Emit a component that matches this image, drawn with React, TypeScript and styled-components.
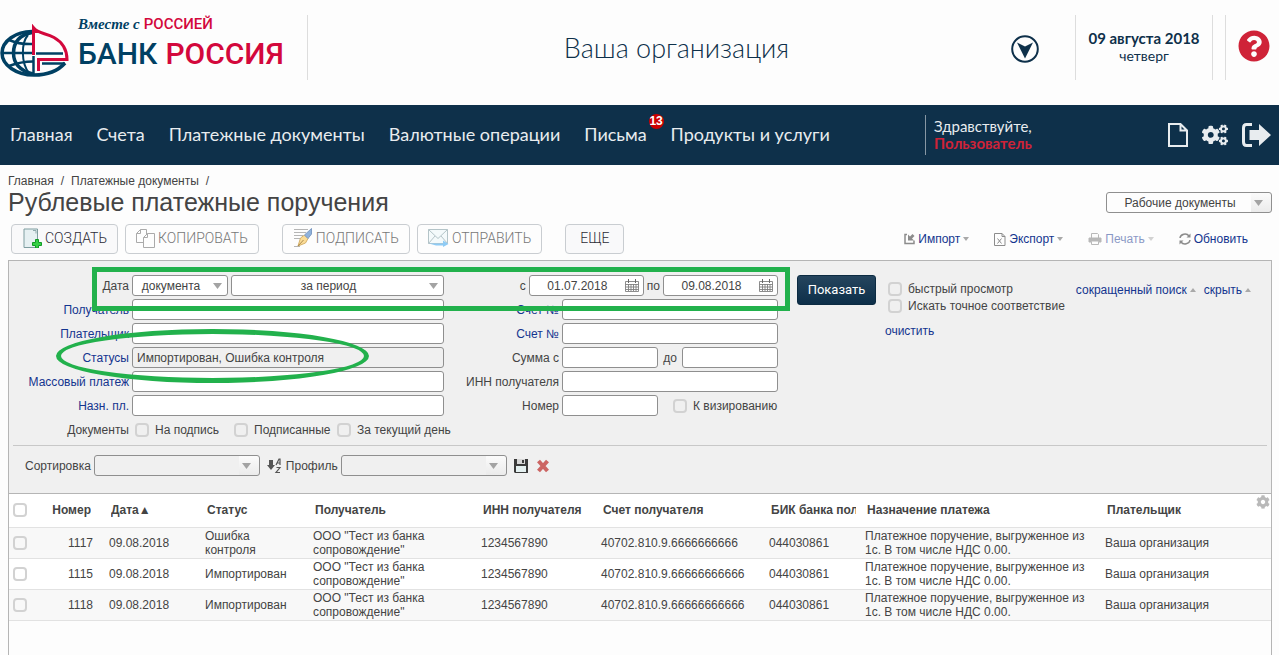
import React from "react";
import styled, { createGlobalStyle, css } from "styled-components";
import { FaCog, FaCogs, FaQuestionCircle } from "react-icons/fa";

const navy = "#0e304a";
const crimson = "#cf2338";
const logoBlue = "#004063";
const logoRed = "#d3083c";
const ink = "#444";
const link = "#14358f";
const mark = "#22b14c";

const GlobalStyle = createGlobalStyle`
  *, *::before, *::after { box-sizing: border-box; }
  body {
    margin: 0;
    background: #fdfdfd;
    color: ${ink};
    font: 12px/14px "Liberation Sans", Arial, sans-serif;
  }
  button, input, select { font: inherit; color: inherit; }
  a { text-decoration: none; color: inherit; }
`;

const Page = styled.div`
  min-height: 100vh;
  display: flex;
  flex-direction: column;
`;

/* ---------- header ---------- */

const Header = styled.header`
  display: flex;
  align-items: flex-start;
  height: 105px;
  padding-top: 15px;
  color: ${navy};
  font-family: Lato, "Open Sans", sans-serif;
`;

const Cell = styled.div`
  display: flex;
  align-items: center;
  justify-content: center;
  height: 65px;
  flex: none;
`;

const LogoCell = styled(Cell)`
  width: 308px;
  border-right: 1px solid #ddd;
  align-items: flex-start;
  justify-content: flex-start;
`;

const LogoLink = styled.a`
  display: flex;
  align-items: flex-end;
  gap: 8px;
  svg { display: block; }
`;

const LogoText = styled.span`
  display: flex;
  flex-direction: column;
  height: 63px;
`;

const Slogan = styled.span`
  display: flex;
  align-items: baseline;
  gap: 4px;
  font: 500 15px/18px Roboto, sans-serif;
  color: ${logoRed};
  i {
    font: italic bold 15px/18px "Liberation Serif", serif;
    color: ${logoBlue};
  }
`;

const BankName = styled.span`
  display: flex;
  gap: 8px;
  font: 500 30px/42px Roboto, sans-serif;
  color: ${logoBlue};
  b { font-weight: 500; color: ${logoRed}; }
`;

const Organization = styled.div`
  flex: 1;
  padding-left: 38px;
  text-align: center;
  font-size: 27px;
  font-weight: 300;
  line-height: 66px;
`;

const RoundButton = styled.button`
  display: flex;
  padding: 0;
  border: 0;
  background: none;
  cursor: pointer;
`;

const OrgCell = styled(Cell)`
  width: 36px;
  height: 68px;
  margin-right: 32px;
`;

const DateCell = styled(Cell)`
  width: 138px;
  flex-direction: column;
  padding-bottom: 2px;
  border-left: 1px solid #ddd;
  border-right: 1px solid #ddd;
  font-size: 15px;
  line-height: 17px;
  span { font-size: 14px; }
`;

const HelpCell = styled(Cell)`
  width: 54px;
  margin-left: 12px;
  padding: 0 0 3px 2px;
  border-left: 1px solid #ddd;
  color: ${crimson};
`;

/* ---------- navigation ---------- */

const NavBar = styled.nav`
  display: flex;
  align-items: center;
  height: 60px;
  padding: 0 8px 0 10px;
  background: ${navy};
  color: #e8ecef;
  font-family: Lato, "Open Sans", sans-serif;
`;

const NavList = styled.div`
  display: flex;
  flex: 1;
  gap: 24px;
  padding-bottom: 2px;
  font-size: 18px;
  line-height: 20px;
  white-space: nowrap;
`;

const NavLink = styled.a`
  position: relative;
`;

const Badge = styled.span`
  position: absolute;
  top: -10px;
  right: -17px;
  width: 15px;
  height: 15px;
  border-radius: 50%;
  background: #cc0000;
  color: #fff;
  font: bold 12px/15px "Liberation Sans", sans-serif;
  text-align: center;
`;

const Greeting = styled.div`
  width: 243px;
  height: 40px;
  padding: 3px 0 0 8px;
  border-left: 1px solid #8797a4;
  font-size: 15px;
  line-height: 17px;
  b { display: block; font-size: 15px; color: ${crimson}; }
`;

const NavIcons = styled.div`
  display: flex;
  align-items: center;
  gap: 14px;
`;

/* ---------- page heading and toolbar ---------- */

const Heading = styled.div`
  display: flex;
  justify-content: space-between;
  align-items: flex-end;
  padding: 9px 7px 0 8px;
`;

const Crumbs = styled.div`
  display: flex;
  gap: 7px;
`;

const Title = styled.h1`
  margin: 0;
  font-size: 25px;
  font-weight: normal;
  line-height: 29px;
`;

const SectionPicker = styled.div`
  padding-bottom: 4px;
`;

const Toolbar = styled.div`
  display: flex;
  align-items: center;
  padding: 7px 31px 6px 11px;
`;

const ToolGroup = styled.div`
  display: flex;
  gap: 7px;
  margin-right: 23px;
`;

const ToolButton = styled.button<{ $wide?: boolean }>`
  display: flex;
  align-items: center;
  gap: 3px;
  height: 30px;
  padding: 0 ${p => (p.$wide ? 14 : 10)}px 2px;
  border: 1px solid #c9cdd1;
  border-radius: 4px;
  background: #f9f9fa;
  color: #2c2c36;
  font: 300 14px/20px Roboto, sans-serif;
  &:disabled { background: #fdfdfd; color: #777; }
`;

const ActionLinks = styled.div`
  display: flex;
  gap: 25px;
  margin-left: auto;
`;

const Action = styled.a<{ $dim?: boolean }>`
  display: flex;
  align-items: center;
  gap: 3px;
  color: ${link};
  opacity: ${p => (p.$dim ? 0.5 : 1)};
`;

/* ---------- controls ---------- */

const box = css`
  height: 21px;
  border: 1px solid #8f8f8f;
  border-radius: 3px;
  background: #fff;
`;

const Input = styled.input<{ $w?: number }>`
  ${box}
  width: ${p => (p.$w ? `${p.$w}px` : "100%")};
  min-width: 0;
  padding: 0 4px;
  &:read-only { background: #f0f0f0; }
`;

const SelectWrap = styled.span<{ $w: number; $split?: boolean }>`
  ${box}
  position: relative;
  display: flex;
  align-items: stretch;
  width: ${p => p.$w}px;
  background: ${p => (p.$split ? "linear-gradient(#fbfbfb, #ebebeb) right / 20px 100% no-repeat" : "#fff")};
  svg { right: ${p => (p.$split ? 8 : 5)}px; }
`;

const SelectField = styled.select`
  appearance: none;
  flex: 1;
  min-width: 0;
  padding: 0 20px 0 2px;
  border: 0;
  background: none;
  text-align: center;
  text-align-last: center;
`;

const SelectArrow = styled.svg`
  position: absolute;
  top: 7px;
  pointer-events: none;
`;

const DateWrap = styled.span`
  ${box}
  display: flex;
  align-items: center;
  width: 115px;
  padding-right: 4px;
  input {
    flex: 1;
    min-width: 0;
    height: 19px;
    padding: 0;
    border: 0;
    background: none;
    text-align: center;
  }
`;

const Tick = styled.input.attrs({ type: "checkbox" })`
  appearance: none;
  flex: none;
  width: 14px;
  height: 14px;
  margin: 0;
  border: 2px solid #d2d2d2;
  border-radius: 4px;
  &:checked { background: #888; }
`;

const TickLabel = styled.label`
  display: flex;
  align-items: center;
  gap: 6px;
  white-space: nowrap;
`;

/* ---------- filter panel ---------- */

const Panel = styled.main`
  flex: 1;
  margin: 0 7px 0 8px;
  border: 1px solid #b5b5b5;
  border-bottom: 0;
`;

const Filter = styled.form`
  position: relative;
  padding: 14px 4px 0;
  border-bottom: 1px solid #b5b5b5;
  background: #f0f0f0;
`;

const FilterTop = styled.div`
  display: flex;
  align-items: flex-start;
  padding-bottom: 5px;
  border-bottom: 1px solid #c8c8c8;
`;

const Fields = styled.div<{ $label: number; $field: number }>`
  display: grid;
  grid-template-columns: ${p => p.$label}px ${p => p.$field}px;
  grid-auto-rows: 21px;
  gap: 3px;
  align-items: center;
`;

const FieldLabel = styled.label<{ $link?: boolean }>`
  text-align: right;
  white-space: nowrap;
  color: ${p => (p.$link ? link : ink)};
`;

const Line = styled.div<{ $gap?: number; $spread?: boolean }>`
  display: flex;
  align-items: center;
  justify-content: ${p => (p.$spread ? "space-between" : "flex-start")};
  gap: ${p => p.$gap ?? 3}px;
`;

const DateLine = styled(Line)`
  grid-column: 1 / -1;
  justify-content: flex-end;
`;

const TickLine = styled.div`
  display: grid;
  grid-template-columns: 99px 103px auto;
  padding-left: 3px;
`;

const ShowButton = styled.button`
  width: 79px;
  height: 30px;
  margin: 0 12px 0 19px;
  padding: 0;
  border: 1px solid #0c2b42;
  border-radius: 3px;
  background: linear-gradient(#25455e, #0d2f49);
  color: #fff;
  font: 13px/20px Roboto, sans-serif;
`;

const Options = styled.div`
  display: flex;
  flex-direction: column;
  gap: 3px;
  padding-top: 7px;
  a { margin: 8px 0 0 -3px; color: ${link}; }
`;

const FoldLinks = styled.div`
  display: flex;
  gap: 8px;
  margin: 8px 16px 0 auto;
`;

const SortLine = styled.div`
  display: flex;
  align-items: center;
  gap: 3px;
  height: 47px;
  padding: 0 0 8px 12px;
`;

const IconButton = styled.button`
  display: flex;
  margin: 0 1px 0 4px;
  padding: 0;
  border: 0;
  background: none;
`;

const HighlightBox = styled.div`
  position: absolute;
  left: 83px;
  top: 6px;
  width: 698px;
  height: 44px;
  border: 5px solid ${mark};
  pointer-events: none;
`;

const HighlightOval = styled.div`
  position: absolute;
  left: 47px;
  top: 68px;
  width: 313px;
  height: 54px;
  border: 5px solid ${mark};
  border-radius: 50%;
  pointer-events: none;
`;

/* ---------- documents table ---------- */

const TableWrap = styled.div`
  position: relative;
`;

const Table = styled.table`
  width: 100%;
  table-layout: fixed;
  border-collapse: collapse;
  background: #fff;
  th, td {
    height: 31px;
    padding: 1px 8px;
    border-bottom: 1px solid #e2e2e2;
    text-align: left;
  }
  th {
    height: 33px;
    padding: 0 1px 0 10px;
    white-space: nowrap;
  }
  th div { overflow: hidden; }
  tbody tr:nth-child(odd) { background: #f8f8f8; }
  tr > :first-child { padding: 0 0 0 4px; }
  tr > :first-child input { display: block; }
  th:nth-child(2) { text-align: right; padding-left: 0; padding-right: 10px; }
  td:nth-child(2) { text-align: right; }
`;

const GearButton = styled.button`
  position: absolute;
  top: 1px;
  right: 1px;
  display: flex;
  padding: 0;
  border: 0;
  background: none;
  color: #b9b9b9;
`;

/* ---------- drawings ---------- */

const Emblem = () => (
  <svg width="70" height="54" viewBox="0 0 70 54" fill="none">
    <g stroke={logoBlue} strokeWidth="3.500">
      <path d="M65 39C58 47 47 51 34 51 16 51 2 41 2 29S16 7.500 32 7.500" />
      <path d="M32 8.500C20 11 13.500 18 13.500 29S21 47 33 50" />
      <path d="M28 11C21 19 21 39 29 49" strokeWidth="2" />
      <path d="M2 29H33M9 16C16 19 24 20.500 33 20M9 42C17 39 24 37.500 33 37.500" strokeWidth="2.500" />
      <path d="M36 29.500H63M42 39.500H65M33.500 32V50" strokeWidth="2.500" />
    </g>
    <path d="M33.500 31V4C38 9.500 46 9 54 13.500 62 18 67 24 67 35.500H38.500V47" stroke={logoRed} strokeWidth="3" />
    <path d="M32 0L40 9H32Z" fill={logoRed} />
  </svg>
);

const CircleArrow = () => (
  <svg width="28" height="28" viewBox="0 0 28 28">
    <circle cx="14" cy="14" r="12.800" fill="none" stroke={navy} strokeWidth="2" />
    <path d="M6 7.500L14 11.500 22 7.500 14 23.500Z" fill={navy} />
  </svg>
);

const PageIcon = () => (
  <svg width="20" height="24" viewBox="0 0 20 24" fill="none" stroke="#e8ecef" strokeWidth="2">
    <path d="M1 1H12.500L19 7.500V23H1ZM12.500 1V7.500H19" />
  </svg>
);

const ExitIcon = () => (
  <svg width="29" height="24" viewBox="0 0 29 24">
    <path d="M10 1.500H4.500Q1.500 1.500 1.500 5V19Q1.500 22.500 4.500 22.500H10" fill="none" stroke="#e8ecef" strokeWidth="3" />
    <path d="M7.500 7H17V1L29 12 17 23V17H7.500Z" fill="#e8ecef" />
  </svg>
);

const Caret = ({ up = false }: { up?: boolean }) => (
  <svg width="6" height="4" viewBox="0 0 6 4">
    <path d={up ? "M0 4L3 0 6 4Z" : "M0 0H6L3 4Z"} fill="#a9a9a9" />
  </svg>
);

const CreateIcon = () => (
  <svg width="20" height="20" viewBox="0 0 20 20">
    <path d="M2 1H15.500V19.500H2Z" fill="#e6f0f2" stroke="#7f9da0" />
    <path d="M11 2.500H14V5.500" fill="none" stroke="#8fa9ac" />
    <path d="M13.500 11.500H16.500V14.500H19.500V17.500H16.500V20H13.500V17.500H10.500V14.500H13.500Z" fill="#35d045" stroke="#129a26" />
  </svg>
);

const CopyIcon = () => (
  <svg width="19" height="19" viewBox="0 0 19 19" fill="#fdfdfd" stroke="#aaa">
    <path d="M4.500 .5H10.500V13.500H.5V4.500ZM4.500 .5V4.500H.5" />
    <path d="M11.500 4.500H18.500V18.500H7.500V8.500ZM11.500 4.500V8.500H7.500" />
  </svg>
);

const SignIcon = () => (
  <svg width="20" height="20" viewBox="0 0 20 20">
    <path d="M1 1.500H15M1 4.500H13M1 7.500H10M1 10.500H7M1 18.500H7" stroke="#b5b5b5" />
    <path d="M5 18L7.500 10 11.500 7 15 10.500 12.500 15Z" fill="#fbdc96" stroke="#d5b16b" />
    <path d="M11.500 7L18.500 .5V6L15 10.500Z" fill="#8fb2dc" stroke="#7f9cc4" />
    <path d="M5 18L10.500 12" stroke="#a98a50" />
  </svg>
);

const SendIcon = () => (
  <svg width="21" height="18" viewBox="0 0 21 18">
    <path d="M.5 .5H19.500V14.500H.5Z" fill="#f4fafb" stroke="#b4c4c8" />
    <path d="M.5 .5L10 9.500 19.500 .5M.5 14.500L7 7M19.500 14.500L13 7" fill="none" stroke="#b4c4c8" />
    <path d="M1 14.500H15V11.500L20.500 15 15 18V16.500H8Z" fill="#8ecbf5" />
  </svg>
);

const ImportIcon = () => (
  <svg width="11" height="12" viewBox="0 0 11 12" fill="none" stroke="#8c8c8c">
    <path d="M3 1.500H1V10.500H10V7.500" strokeWidth="1.500" />
    <path d="M4 7.500V1.500L6 3.500 8.500 1 10.500 3 8 5.500 10 7.500Z" fill="#8c8c8c" stroke="none" />
  </svg>
);

const ExportIcon = () => (
  <svg width="12" height="13" viewBox="0 0 12 13" fill="none" stroke="#8c8c8c">
    <path d="M.5 .5H8L11 3.500V12.500H.5ZM8 .5V3.500H11" />
    <path d="M3.500 5.500L7.500 10.500M7.500 5.500L3.500 10.500" />
  </svg>
);

const PrintIcon = () => (
  <svg width="14" height="12" viewBox="0 0 14 12" fill="none" stroke="#777">
    <path d="M3.500 5V.5H9.500L10.500 1.500V5M3.500 8.500V11.500H10.500V8.500" />
    <path d="M1 5H13V9H11V8H3V9H1Z" fill="#777" stroke="#777" />
  </svg>
);

const RefreshIcon = () => (
  <svg width="12" height="12" viewBox="0 0 12 12" fill="none" stroke="#8c8c8c" strokeWidth="1.500">
    <path d="M1 5C1.500 1 7.500 -.5 10 3M11 7C10.500 11 4.500 12.500 2 9" />
    <path d="M11.500 .5V4.500H7.500ZM.5 11.500V7.500H4.500Z" fill="#8c8c8c" stroke="none" />
  </svg>
);

const CalendarIcon = () => (
  <svg width="14" height="13" viewBox="0 0 14 13" fill="none" stroke="#808080">
    <path d="M.5 2.500H13.500V12.500H.5ZM.5 5.500H13.500M.5 8H13.500M.5 10.500H13.500M3.500 5V12M6 5V12M8.500 5V12M11 5V12" strokeWidth=".9" />
    <path d="M3.500 0V4M10.500 0V4" stroke="#6a6a6a" />
  </svg>
);

const SortIcon = () => (
  <svg width="15" height="16" viewBox="0 0 15 16" fill="none" stroke="#555">
    <path d="M2 2H6V7H8L4 12 0 7H2Z" fill="#555" stroke="none" />
    <path d="M9 7L12 1H13V7M10 5H13M9.500 9.500H13L9 14.500H13" strokeWidth="1.200" />
  </svg>
);

const SaveIcon = () => (
  <svg width="14" height="14" viewBox="0 0 14 14">
    <path d="M0 0H14V14H1L0 13Z" fill="#3b3b3b" />
    <path d="M3 0H11V5H3Z" fill="#d7d7d7" />
    <path d="M8 1H10V4H8Z" fill="#3b3b3b" />
    <path d="M2 7H12V13H2Z" fill="#e4f0f0" />
  </svg>
);

const DeleteIcon = () => (
  <svg width="14" height="14" viewBox="0 0 14 14">
    <path d="M2.500 2L11.500 12M11.500 2L2.500 12" stroke="#cc6563" strokeWidth="4" />
  </svg>
);

/* ---------- composed parts ---------- */

type DropDownProps = { label: string; value?: string; width: number; split?: boolean; id?: string };

const DropDown = ({ label, value = "", width, split, id }: DropDownProps) => (
  <SelectWrap $w={width} $split={split}>
    <SelectField id={id} aria-label={label} defaultValue={value}>
      <option value={value}>{value}</option>
    </SelectField>
    <SelectArrow width="9" height="6" viewBox="0 0 9 6">
      <path d="M0 0H9L4.500 6Z" fill="#a3a3a3" />
    </SelectArrow>
  </SelectWrap>
);

const DateField = ({ id, value }: { id: string; value: string }) => (
  <DateWrap>
    <input id={id} defaultValue={value} />
    <CalendarIcon />
  </DateWrap>
);

const Check = ({ children }: { children: string }) => (
  <TickLabel>
    <Tick />
    {children}
  </TickLabel>
);

const menu = ["Главная", "Счета", "Платежные документы", "Валютные операции", "Письма", "Продукты и услуги"];

const columns = [
  { name: "Номер", width: 60 },
  { name: "Дата▲", width: 96 },
  { name: "Статус", width: 108 },
  { name: "Получатель", width: 168 },
  { name: "ИНН получателя", width: 120 },
  { name: "Счет получателя", width: 168 },
  { name: "БИК банка пол", width: 96 },
  { name: "Назначение платежа", width: 240 },
  { name: "Плательщик" },
];

const rows = [
  { number: "1117", status: "Ошибка контроля", account: "40702.810.9.6666666666" },
  { number: "1115", status: "Импортирован", account: "40702.810.9.66666666666" },
  { number: "1118", status: "Импортирован", account: "40702.810.9.66666666666" },
];

export default function App() {
  return (
    <Page>
      <GlobalStyle />
      <Header>
        <LogoCell>
          <LogoLink href="#">
            <Emblem />
            <LogoText>
              <Slogan><i>Вместе с</i>РОССИЕЙ</Slogan>
              <BankName>БАНК<b>РОССИЯ</b></BankName>
            </LogoText>
          </LogoLink>
        </LogoCell>
        <Organization>Ваша организация</Organization>
        <OrgCell>
          <RoundButton aria-label="Выбрать организацию"><CircleArrow /></RoundButton>
        </OrgCell>
        <DateCell>
          <b>09 августа 2018</b>
          <span>четверг</span>
        </DateCell>
        <HelpCell>
          <RoundButton aria-label="Помощь"><FaQuestionCircle size={32} color={crimson} /></RoundButton>
        </HelpCell>
      </Header>

      <NavBar>
        <NavList>
          {menu.map(item => (
            <NavLink href="#" key={item}>
              {item}
              {item === "Письма" && <Badge>13</Badge>}
            </NavLink>
          ))}
        </NavList>
        <Greeting>Здравствуйте,<b>Пользователь</b></Greeting>
        <NavIcons>
          <RoundButton aria-label="Документ"><PageIcon /></RoundButton>
          <RoundButton aria-label="Настройки"><FaCogs size={26} color="#e8ecef" /></RoundButton>
          <RoundButton aria-label="Выход"><ExitIcon /></RoundButton>
        </NavIcons>
      </NavBar>

      <Heading>
        <div>
          <Crumbs>
            <a href="#">Главная</a><span>/</span><a href="#">Платежные документы</a><span>/</span>
          </Crumbs>
          <Title>Рублевые платежные поручения</Title>
        </div>
        <SectionPicker>
          <DropDown label="Раздел" value="Рабочие документы" width={166} split />
        </SectionPicker>
      </Heading>

      <Toolbar>
        <ToolGroup>
          <ToolButton><CreateIcon />СОЗДАТЬ</ToolButton>
          <ToolButton disabled><CopyIcon />КОПИРОВАТЬ</ToolButton>
        </ToolGroup>
        <ToolGroup>
          <ToolButton disabled><SignIcon />ПОДПИСАТЬ</ToolButton>
          <ToolButton disabled><SendIcon />ОТПРАВИТЬ</ToolButton>
        </ToolGroup>
        <ToolButton $wide>ЕЩЕ</ToolButton>
        <ActionLinks>
          <Action href="#"><ImportIcon />Импорт<Caret /></Action>
          <Action href="#"><ExportIcon />Экспорт<Caret /></Action>
          <Action href="#" $dim><PrintIcon />Печать<Caret /></Action>
          <Action href="#"><RefreshIcon />Обновить</Action>
        </ActionLinks>
      </Toolbar>

      <Panel>
        <Filter onSubmit={e => e.preventDefault()}>
          <FilterTop>
            <Fields $label={116} $field={312}>
              <FieldLabel htmlFor="dateKind">Дата</FieldLabel>
              <Line>
                <DropDown id="dateKind" label="Дата" value="документа" width={96} />
                <DropDown label="Период" value="за период" width={213} />
              </Line>
              <FieldLabel $link htmlFor="payee">Получатель</FieldLabel>
              <Input id="payee" />
              <FieldLabel $link htmlFor="payer">Плательщик</FieldLabel>
              <Input id="payer" />
              <FieldLabel $link htmlFor="statuses">Статусы</FieldLabel>
              <Input id="statuses" readOnly value="Импортирован, Ошибка контроля" />
              <FieldLabel $link htmlFor="mass">Массовый платеж</FieldLabel>
              <Input id="mass" />
              <FieldLabel $link htmlFor="purpose">Назн. пл.</FieldLabel>
              <Input id="purpose" />
              <FieldLabel as="span">Документы</FieldLabel>
              <TickLine>
                <Check>На подпись</Check>
                <Check>Подписанные</Check>
                <Check>За текущий день</Check>
              </TickLine>
            </Fields>
            <Fields $label={115} $field={216}>
              <DateLine>
                <label htmlFor="from">с</label>
                <DateField id="from" value="01.07.2018" />
                <label htmlFor="to">по</label>
                <DateField id="to" value="09.08.2018" />
              </DateLine>
              <FieldLabel $link htmlFor="acc1">Счет №</FieldLabel>
              <Input id="acc1" />
              <FieldLabel $link htmlFor="acc2">Счет №</FieldLabel>
              <Input id="acc2" />
              <FieldLabel htmlFor="sumFrom">Сумма с</FieldLabel>
              <Line $spread>
                <Input id="sumFrom" $w={96} />
                <FieldLabel htmlFor="sumTo">до</FieldLabel>
                <Input id="sumTo" $w={96} />
              </Line>
              <FieldLabel htmlFor="inn">ИНН получателя</FieldLabel>
              <Input id="inn" />
              <FieldLabel htmlFor="num">Номер</FieldLabel>
              <Line $gap={15}>
                <Input id="num" $w={96} />
                <Check>К визированию</Check>
              </Line>
            </Fields>
            <ShowButton>Показать</ShowButton>
            <Options>
              <Check>быстрый просмотр</Check>
              <Check>Искать точное соответствие</Check>
              <a href="#">очистить</a>
            </Options>
            <FoldLinks>
              <Action href="#">сокращенный поиск<Caret up /></Action>
              <Action href="#">скрыть<Caret up /></Action>
            </FoldLinks>
          </FilterTop>
          <SortLine>
            <label htmlFor="sort">Сортировка</label>
            <DropDown id="sort" label="Сортировка" width={166} split />
            <IconButton type="button" aria-label="Порядок"><SortIcon /></IconButton>
            <label htmlFor="profile">Профиль</label>
            <DropDown id="profile" label="Профиль" width={166} split />
            <IconButton type="button" aria-label="Сохранить"><SaveIcon /></IconButton>
            <IconButton type="button" aria-label="Удалить"><DeleteIcon /></IconButton>
          </SortLine>
          <HighlightBox />
          <HighlightOval />
        </Filter>

        <TableWrap>
          <Table>
            <colgroup>
              <col width={32} />
              {columns.map(c => <col key={c.name} width={c.width} />)}
            </colgroup>
            <thead>
              <tr>
                <th><Tick aria-label="Выбрать все" /></th>
                {columns.map(c => <th key={c.name}><div>{c.name}</div></th>)}
              </tr>
            </thead>
            <tbody>
              {rows.map(r => (
                <tr key={r.number}>
                  <td><Tick aria-label={`Выбрать ${r.number}`} /></td>
                  <td>{r.number}</td>
                  <td>09.08.2018</td>
                  <td>{r.status}</td>
                  <td>ООО "Тест из банка сопровождение"</td>
                  <td>1234567890</td>
                  <td>{r.account}</td>
                  <td>044030861</td>
                  <td>Платежное поручение, выгруженное из 1с. В том числе НДС 0.00.</td>
                  <td>Ваша организация</td>
                </tr>
              ))}
            </tbody>
          </Table>
          <GearButton aria-label="Настройка столбцов"><FaCog size={14} /></GearButton>
        </TableWrap>
      </Panel>
    </Page>
  );
}
